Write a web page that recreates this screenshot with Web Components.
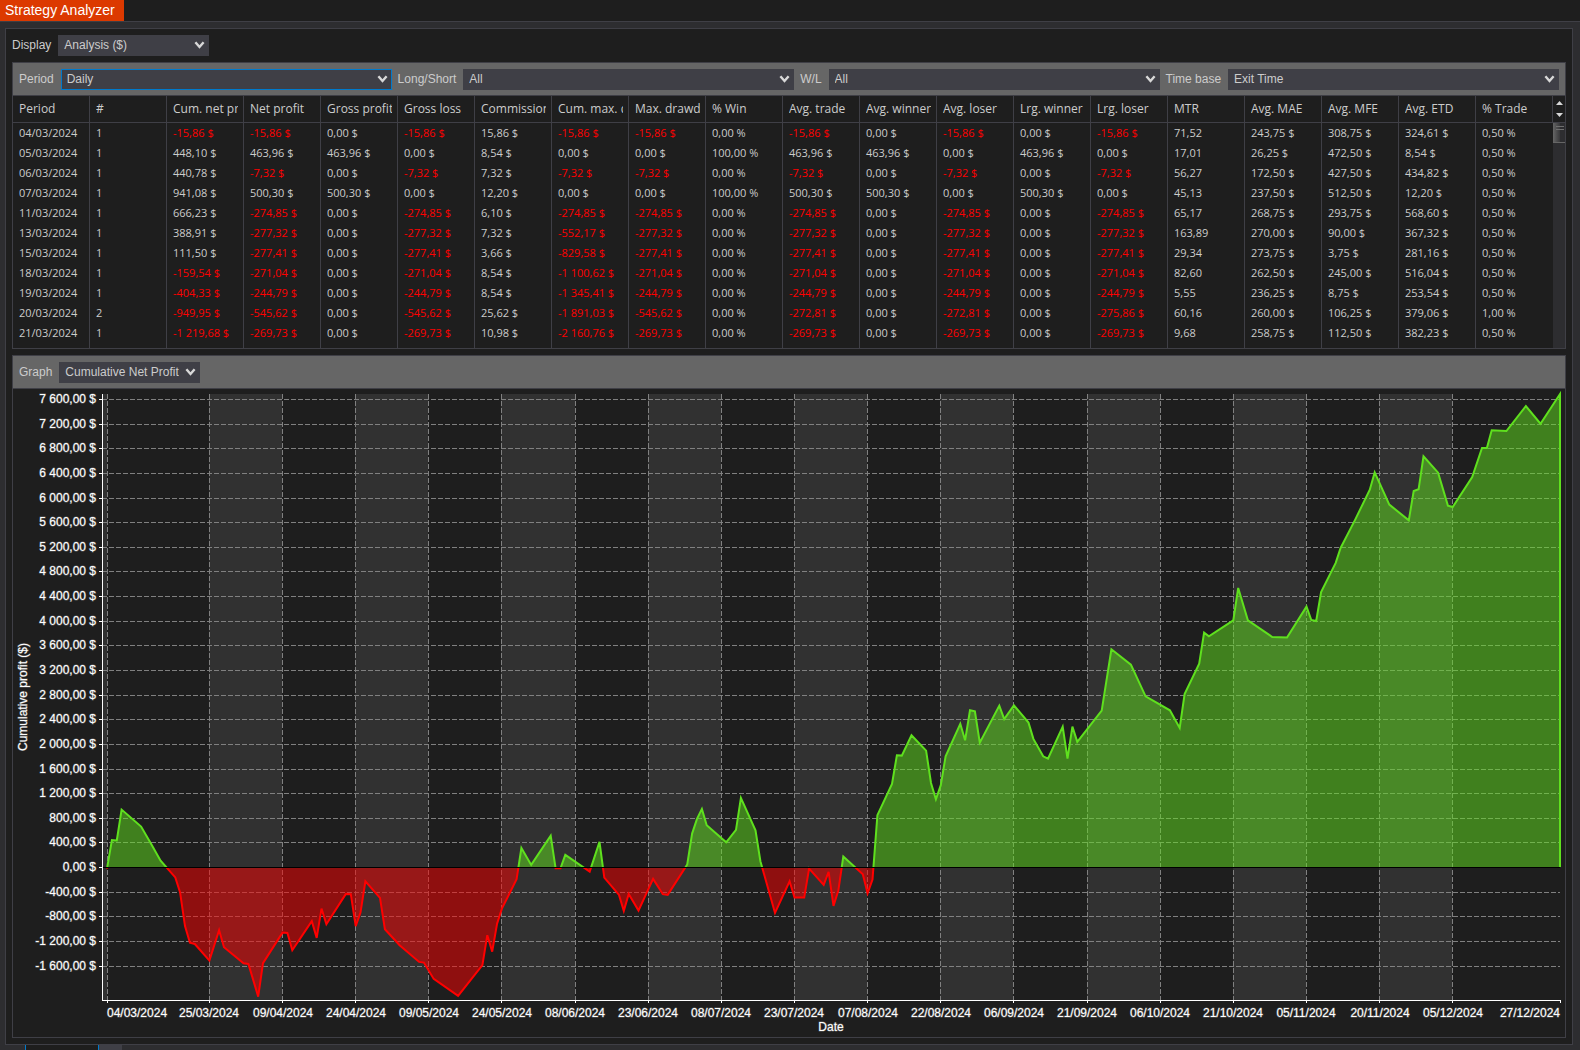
<!DOCTYPE html>
<html lang="en">
<head>
<meta charset="utf-8">
<title>Strategy Analyzer</title>
<style>
  html, body { height: 100%; margin: 0; }
  body {
    --surface: #1e1e1e; --frame: #2d2d30; --line: #3f3f46; --bar: #666666;
    --field: #3f3f46; --text: #cccccc; --loss: #ff0000; --accent: #dc3900; --focus: #007acc;
    background: var(--frame); color: var(--text);
    font: 12px/20px "Liberation Sans", Arial, sans-serif;
  }
</style>
</head>
<body>
<strategy-analyzer></strategy-analyzer>

<script>
const html = (s) => { const t = document.createElement('template'); t.innerHTML = s; return t; };
class Base extends HTMLElement {
  constructor() {
    super();
    this.attachShadow({ mode: 'open' }).append(this.constructor.template.content.cloneNode(true));
  }
  $(q) { return this.shadowRoot.querySelector(q); }
}

/* Label and drop-down */
class DropDown extends Base {
  static template = html(`
    <style>
      :host { display: flex; align-items: center; gap: 7px; min-width: 0; }
      label { white-space: nowrap; line-height: 21px; }
      .field { position: relative; flex: 1; display: flex; min-width: 0; }
      :host([fill]) .field { contain: inline-size; }
      select {
        appearance: none; flex: 1; min-width: 0; width: 100%; height: 21px; margin: 0; padding: 0 20px 0 5px;
        border: 1px solid var(--field); border-radius: 0; outline: none;
        background: var(--field); color: var(--text); font: inherit; line-height: 19px;
      }
      :host([active]) select { border-color: var(--focus); }
      svg { position: absolute; right: 4px; top: 5px; width: 11px; height: 10px; pointer-events: none; }
      path { fill: none; stroke: #d8d8d8; stroke-width: 2.4; }
    </style>
    <label for="s"></label>
    <div class="field"><select id="s"></select>
      <svg viewBox="0 0 11 10" aria-hidden="true"><path d="M1.4 2.2 L5.5 7 L9.6 2.2"/></svg></div>`);
  connectedCallback() {
    this.$('label').textContent = this.getAttribute('label');
    this.$('select').replaceChildren(...this.getAttribute('options').split('|').map(o => new Option(o)));
  }
}
customElements.define('drop-down', DropDown);

/* Bordered box with a grey tool bar on top */
class ToolPanel extends Base {
  static template = html(`
    <style>
      :host { display: flex; flex-direction: column; border: 1px solid var(--line); min-width: 0; }
      .bar { display: flex; gap: 6px; padding: 6px 6px 5px; height: 21px; align-items: center; background: var(--bar); border-bottom: 1px solid var(--line); }
      .body { flex: 1; display: flex; min-height: 0; }
      .body ::slotted(*) { flex: 1; }
    </style>
    <div class="bar"><slot name="bar"></slot></div>
    <div class="body"><slot></slot></div>`);
}
customElements.define('tool-panel', ToolPanel);

/* Scroll bar with header arrows */
class GridScroll extends Base {
  static template = html(`
    <style>
      :host { display: flex; flex-direction: column; width: 12px; }
      .arrows { height: 27px; display: flex; flex-direction: column; justify-content: space-between; align-items: center;
        padding: 4px 0; box-sizing: border-box; border-bottom: 1px solid var(--line); }
      button { all: unset; display: block; width: 9px; height: 6px; }
      svg { display: block; width: 9px; height: 6px; fill: #d8d8d8; }
      .track { flex: 1; background: var(--frame); }
      .thumb { height: 19px; background: linear-gradient(90deg, #666 0, #3a3a3c 55%, #2d2d30 60%); border-bottom: 1px solid #666; }
      .thumb svg { width: 12px; height: 19px; }
    </style>
    <div class="arrows">
      <button aria-label="Scroll up"><svg viewBox="0 0 9 6"><path d="M1 5 L4.5 1 L8 5z"/></svg></button>
      <button aria-label="Scroll down"><svg viewBox="0 0 9 6"><path d="M1 1 L4.5 5 L8 1z"/></svg></button>
    </div>
    <div class="track"><div class="thumb"><svg viewBox="0 0 12 19" shape-rendering="crispEdges"><path fill="#707070" d="M3 3h8v1h-8zM3 6h8v1h-8z"/></svg></div></div>`);
}
customElements.define('grid-scroll', GridScroll);

/* Table of results per period */
class PerformanceGrid extends Base {
  static columns = ['Period', '#', 'Cum. net profit', 'Net profit', 'Gross profit', 'Gross loss', 'Commission', 'Cum. max. drawdown', 'Max. drawdown', '% Win', 'Avg. trade', 'Avg. winner', 'Avg. loser', 'Lrg. winner', 'Lrg. loser', 'MTR', 'Avg. MAE', 'Avg. MFE', 'Avg. ETD', '% Trade'];
  static units = ['', '', '$', '$', '$', '$', '$', '$', '$', '%', '$', '$', '$', '$', '$', '', '$', '$', '$', '%'];
  static rows = `04/03/2024|1|-15,86|-15,86|0,00|-15,86|15,86|-15,86|-15,86|0,00|-15,86|0,00|-15,86|0,00|-15,86|71,52|243,75|308,75|324,61|0,50
05/03/2024|1|448,10|463,96|463,96|0,00|8,54|0,00|0,00|100,00|463,96|463,96|0,00|463,96|0,00|17,01|26,25|472,50|8,54|0,50
06/03/2024|1|440,78|-7,32|0,00|-7,32|7,32|-7,32|-7,32|0,00|-7,32|0,00|-7,32|0,00|-7,32|56,27|172,50|427,50|434,82|0,50
07/03/2024|1|941,08|500,30|500,30|0,00|12,20|0,00|0,00|100,00|500,30|500,30|0,00|500,30|0,00|45,13|237,50|512,50|12,20|0,50
11/03/2024|1|666,23|-274,85|0,00|-274,85|6,10|-274,85|-274,85|0,00|-274,85|0,00|-274,85|0,00|-274,85|65,17|268,75|293,75|568,60|0,50
13/03/2024|1|388,91|-277,32|0,00|-277,32|7,32|-552,17|-277,32|0,00|-277,32|0,00|-277,32|0,00|-277,32|163,89|270,00|90,00|367,32|0,50
15/03/2024|1|111,50|-277,41|0,00|-277,41|3,66|-829,58|-277,41|0,00|-277,41|0,00|-277,41|0,00|-277,41|29,34|273,75|3,75|281,16|0,50
18/03/2024|1|-159,54|-271,04|0,00|-271,04|8,54|-1 100,62|-271,04|0,00|-271,04|0,00|-271,04|0,00|-271,04|82,60|262,50|245,00|516,04|0,50
19/03/2024|1|-404,33|-244,79|0,00|-244,79|8,54|-1 345,41|-244,79|0,00|-244,79|0,00|-244,79|0,00|-244,79|5,55|236,25|8,75|253,54|0,50
20/03/2024|2|-949,95|-545,62|0,00|-545,62|25,62|-1 891,03|-545,62|0,00|-272,81|0,00|-272,81|0,00|-275,86|60,16|260,00|106,25|379,06|1,00
21/03/2024|1|-1 219,68|-269,73|0,00|-269,73|10,98|-2 160,76|-269,73|0,00|-269,73|0,00|-269,73|0,00|-269,73|9,68|258,75|112,50|382,23|0,50`;
  static template = html(`
    <style>
      :host { display: flex; min-width: 0; font-family: "Open Sans", "Noto Sans", sans-serif; }
      table { width: 100%; border-collapse: separate; border-spacing: 0; table-layout: fixed; }
      .wrap { flex: 1; min-width: 0; }
      th, td { padding: 0 5px 0 6px; text-align: left; font-weight: 400; white-space: nowrap; border-right: 1px solid var(--line); }
      th { height: 26px; font-size: 12px; border-bottom: 1px solid var(--line); }
      th span { display: block; overflow: hidden; height: 26px; line-height: 25px; }
      td { height: 20px; font-size: 11px; line-height: 20px; }
      tr.rest td { height: 5px; }
      td:last-child { border-right-color: transparent; }
      .loss { color: var(--loss); }
    </style>
    <div class="wrap"><table><thead><tr></tr></thead><tbody></tbody></table></div>
    <grid-scroll></grid-scroll>`);
  connectedCallback() {
    const { columns, units, rows } = PerformanceGrid;
    this.$('thead tr').innerHTML = columns.map(c => `<th scope="col"><span>${c}</span></th>`).join('');
    this.$('tbody').innerHTML = rows.split('\n').map(r => '<tr>' + r.split('|').map((v, i) =>
      `<td${v[0] === '-' ? ' class="loss"' : ''}>${v}${units[i] ? ' ' + units[i] : ''}</td>`).join('') + '</tr>').join('')
      + '<tr class="rest">' + '<td></td>'.repeat(columns.length) + '</tr>';
  }
}
customElements.define('performance-grid', PerformanceGrid);

/* Area chart of the running profit; [day since start, profit] */
class ProfitChart extends Base {
  static data = [[0,-16],[1,448],[2,441],[3,941],[7,666],[9,389],[11,112],[14,-160],[15,-404],[16,-950],[17,-1220],[18,-1240],[21,-1510],[23,-1017],[24,-1293],[28,-1553],[29,-1564],[31,-2094],[32,-1553],[36,-1055],[37,-1060],[38,-1342],[42,-871],[43,-1142],[44,-666],[45,-920],[49,-427],[50,-433],[51,-952],[52,-730],[53,-222],[56,-492],[57,-1001],[60,-1261],[64,-1531],[65,-1542],[67,-1807],[72,-2083],[77,-1585],[78,-1098],[79,-1364],[80,-909],[81,-666],[84,-189],[85,319],[87,43],[91,519],[92,-11],[93,-11],[94,206],[99,-65],[101,417],[102,-162],[105,-444],[106,-703],[107,-427],[109,-698],[112,-184],[114,-433],[115,-444],[119,49],[120,552],[121,790],[122,952],[123,687],[127,411],[129,611],[130,1131],[133,606],[134,103],[137,-736],[140,-222],[141,-487],[143,-487],[144,-16],[147,-281],[148,-70],[149,-622],[150,-368],[151,179],[155,-108],[156,-417],[157,-195],[158,850],[161,1358],[162,1824],[163,1818],[165,2148],[168,1899],[169,1374],[170,1109],[171,1337],[172,1807],[175,2332],[176,2067],[177,2554],[178,2538],[179,2029],[183,2630],[184,2413],[186,2635],[189,2354],[190,2089],[192,1807],[193,1769],[196,2289],[197,1769],[198,2289],[199,2040],[204,2549],[206,3544],[210,3295],[213,2781],[218,2554],[220,2267],[221,2819],[224,3311],[225,3815],[226,3755],[231,4015],[232,4540],[234,4015],[239,3744],[242,3734],[246,4237],[247,4020],[248,4004],[249,4475],[252,4946],[253,5189],[256,5649],[259,6136],[260,6417],[263,5893],[267,5638],[268,6114],[269,6142],[270,6677],[273,6412],[275,5877],[276,5855],[280,6342],[282,6812],[283,6812],[284,7099],[287,7088],[291,7494],[294,7207],[298,7689]];
  static ticks = [[0,'04/03/2024'],[21,'25/03/2024'],[36,'09/04/2024'],[51,'24/04/2024'],[66,'09/05/2024'],[81,'24/05/2024'],[96,'08/06/2024'],[111,'23/06/2024'],[126,'08/07/2024'],[141,'23/07/2024'],[156,'07/08/2024'],[171,'22/08/2024'],[186,'06/09/2024'],[201,'21/09/2024'],[216,'06/10/2024'],[231,'21/10/2024'],[246,'05/11/2024'],[261,'20/11/2024'],[276,'05/12/2024'],[298,'27/12/2024']];
  static template = html(`
    <style>
      :host { display: block; min-width: 0; min-height: 200px; overflow: hidden; contain: size; }
      svg { display: block; width: 100%; height: 100%; }
      text { fill: #fff; font-size: 12px; stroke: rgb(255 255 255 / .3); }
      .band { fill: #313131; }
      .grid { stroke: #808080; stroke-dasharray: 5 2; fill: none; }
      .axis { stroke: #fff; fill: none; }
      .zero { stroke: #000; }
      .gain { fill: rgb(98 226 30 / .5); } .fall { fill: rgb(255 0 0 / .5); }
      .gain-line { fill: none; stroke: #5fe01e; stroke-width: 2; } .fall-line { fill: none; stroke: #f00; stroke-width: 2; }
    </style>
    <svg role="img" aria-label="Cumulative net profit"></svg>`);
  connectedCallback() {
    this.draw();
    new ResizeObserver(() => this.draw()).observe(this);
  }
  draw() {
    const W = this.clientWidth, H = this.clientHeight;
    if (!W || !H) return;
    const { data, ticks } = ProfitChart;
    const left = 89, first = 94, right = W - 5, top = 5, bottom = H - 37;
    const high = 7689, low = -2150, last = 298;
    const X = d => first + (right - first) * d / last;
    const Y = v => top + (bottom - top) * (high - v) / (high - low);
    const px = n => Math.floor(n) + .5;
    const money = v => (v < 0 ? '-' : '') + String(Math.abs(v)).replace(/(\d)(\d{3})$/, '$1 $2') + ',00 $';
    const zero = Math.floor(Y(0));
    let s = `<defs><clipPath id="up"><rect width="${W}" height="${zero}"/></clipPath>
      <clipPath id="down"><rect y="${zero + 1}" width="${W}" height="${H}"/></clipPath></defs><g shape-rendering="crispEdges">`;
    s += `<rect class="band" x="${left}" y="${top}" width="${first - left}" height="${bottom - top}"/>`;
    for (let i = 1; i < ticks.length - 1; i += 2) {
      const a = Math.floor(X(ticks[i][0])), b = Math.floor(X(ticks[i + 1][0]));
      s += `<rect class="band" x="${a}" y="${top}" width="${b - a}" height="${bottom - top}"/>`;
    }
    const levels = [];
    for (let v = 7600; v >= -1600; v -= 400) levels.push(v);
    for (const v of levels) s += `<path class="grid" d="M${left} ${px(Y(v))}H${right}"/>`;
    for (const [d] of ticks.slice(0, -1)) s += `<path class="grid" d="M${px(X(d))} ${top}V${bottom}"/>`;
    s += '</g>';
    const pts = data.map(([d, v]) => `${X(d).toFixed(1)} ${Y(v).toFixed(1)}`).join('L');
    const area = `M${first} ${zero}L${pts}L${right} ${zero}`;
    s += `<g clip-path="url(#up)"><path class="gain" d="${area}z"/><path class="gain-line" d="${area}"/></g>`;
    s += `<g clip-path="url(#down)"><path class="fall" d="${area}z"/><path class="fall-line" d="M${pts}"/></g>`;
    s += `<g shape-rendering="crispEdges"><path class="zero" d="M${left} ${zero + .5}H${right}"/>`;
    s += `<path class="axis" d="M${left + .5} ${top}V${bottom + .5}H${right + 1}`;
    for (const v of levels) s += `M${left - 3} ${px(Y(v))}h3`;
    for (const [d] of ticks) s += `M${px(X(d))} ${bottom}v3`;
    s += '"/></g>';
    for (const v of levels) s += `<text text-anchor="end" x="83" y="${Math.floor(Y(v)) + 4}">${money(v)}</text>`;
    ticks.forEach(([d, t], i) => {
      const a = i === 0 ? 'start' : i === ticks.length - 1 ? 'end' : 'middle';
      s += `<text text-anchor="${a}" x="${Math.round(X(d))}" y="${bottom + 17}">${t}</text>`;
    });
    s += `<text text-anchor="middle" x="${Math.round((left + right) / 2)}" y="${bottom + 31}">Date</text>`;
    s += `<text text-anchor="middle" transform="translate(14 ${Math.round((top + bottom) / 2)}) rotate(-90)">Cumulative profit ($)</text>`;
    this.$('svg').innerHTML = s;
  }
}
customElements.define('profit-chart', ProfitChart);

/* Window frame */
class StrategyAnalyzer extends Base {
  static template = html(`
    <style>
      :host { display: flex; flex-direction: column; min-height: 100vh; box-sizing: border-box; }
      header { display: flex; background: var(--surface); border-bottom: 1px solid var(--line); }
      h1 { margin: 0; padding: 0 9px 0 5px; background: var(--accent); color: #fff; font-size: 14px; line-height: 21px; font-weight: 400; }
      main { flex: 1; display: flex; flex-direction: column; gap: 6px; margin: 6px 7px 0 5px; padding: 6px; background: var(--surface); border: 1px solid var(--line); }
      .row { display: flex; }
      .display { width: 197px; }
      .wide { flex: 1 1 auto; }
      .graph { flex: 1; }
      footer { display: flex; height: 5px; padding-left: 25px; }
      .sheet { width: 72px; background: var(--surface); border: solid var(--focus); border-width: 0 1px; }
      .next { width: 23px; background: var(--field); }
    </style>
    <header><h1>Strategy Analyzer</h1></header>
    <main>
      <div class="row"><drop-down class="display" label="Display" options="Analysis ($)|Summary|Trades|Orders"></drop-down></div>
      <tool-panel>
        <drop-down slot="bar" class="wide" fill active label="Period" options="Daily|Weekly|Monthly"></drop-down>
        <drop-down slot="bar" class="wide" fill label="Long/Short" options="All|Long|Short"></drop-down>
        <drop-down slot="bar" class="wide" fill label="W/L" options="All|Winners|Losers"></drop-down>
        <drop-down slot="bar" class="wide" fill label="Time base" options="Exit Time|Entry Time"></drop-down>
        <performance-grid></performance-grid>
      </tool-panel>
      <tool-panel class="graph">
        <drop-down slot="bar" label="Graph" options="Cumulative Net Profit|Net Profit|Drawdown"></drop-down>
        <profit-chart></profit-chart>
      </tool-panel>
    </main>
    <footer><div class="sheet"></div><div class="next"></div></footer>`);
}
customElements.define('strategy-analyzer', StrategyAnalyzer);
</script>
</body>
</html>
